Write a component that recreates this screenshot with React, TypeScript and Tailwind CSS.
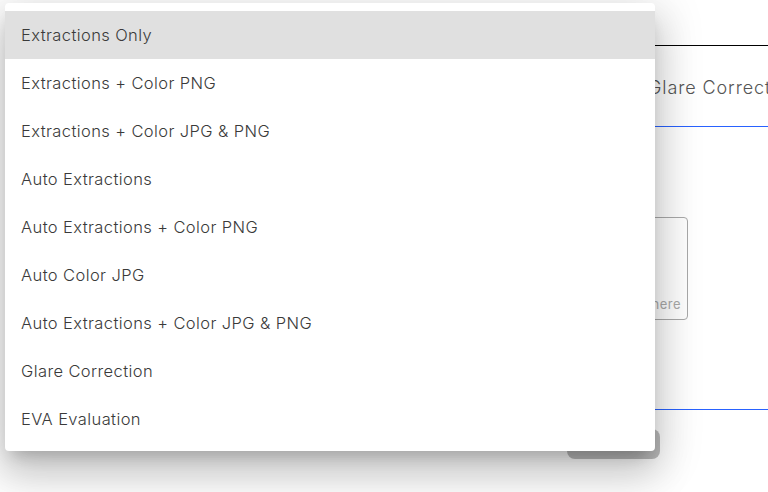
import React from "react";

const options = [
  "Extractions Only",
  "Extractions + Color PNG",
  "Extractions + Color JPG & PNG",
  "Auto Extractions",
  "Auto Extractions + Color PNG",
  "Auto Color JPG",
  "Auto Extractions + Color JPG & PNG",
  "Glare Correction",
  "EVA Evaluation",
];

export default function App() {
  return (
    <div className="relative w-[768px] h-[492px] overflow-hidden bg-white font-['Inter',sans-serif] text-[#3a3a3a]">
      {/* page behind the menu */}
      <div className="flex flex-col pl-[40px]">
        <div className="h-[45px]" />
        <div className="border-t border-black" />
        <div className="h-[81px] pl-[608px] pt-[28px] text-[18px] font-light tracking-[0.9px] text-[#555] whitespace-nowrap overflow-hidden border-b border-[#2962ff]">
          Glare Correction
        </div>
        <div className="h-[90px]" />
        <div className="flex justify-end pr-[80px]">
          <div className="w-[240px] h-[103px] border border-[#aaa] rounded-[4px] flex flex-col items-end justify-end pr-[6px] pb-[6px] text-[13px] text-[#aaa] leading-[18px] tracking-[0.5px]">
            <span className="mr-[27px]">Upload file to</span>
            <span>Drop your file here</span>
          </div>
        </div>
        <div className="h-[90px] border-b border-[#2962ff]" />
        <div className="flex justify-end pr-[108px] pt-[19px]">
          <div className="w-[93px] h-[30px] rounded-[8px] bg-[#bdbdbd] flex items-center justify-center text-[13px] text-[#1e40af]">
            Upload
          </div>
        </div>
      </div>

      {/* select menu */}
      <ul className="absolute left-[5px] top-[3px] w-[650px] bg-white rounded-[4px] py-2 shadow-[0px_11px_15px_-7px_rgba(0,0,0,0.2),0px_24px_38px_3px_rgba(0,0,0,0.14),0px_9px_46px_8px_rgba(0,0,0,0.12)]">
        {options.map((opt, i) => (
          <li
            key={opt}
            className={`h-12 flex items-center px-4 text-[16.5px] font-light tracking-[0.4px] ${i === 0 ? "bg-[#e0e0e0]" : ""}`}
          >
            {opt}
          </li>
        ))}
      </ul>
    </div>
  );
}
